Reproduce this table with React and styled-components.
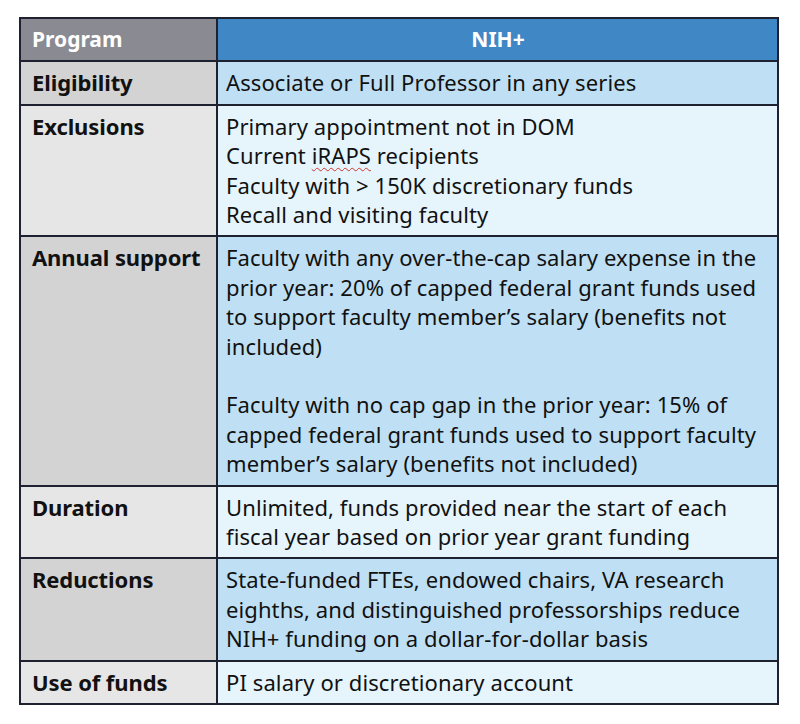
import React from "react";
import styled, { createGlobalStyle } from "styled-components";

const Global = createGlobalStyle`
  html, body { margin: 0; padding: 0; background: #ffffff; }
  body { font-family: "Noto Sans", "Open Sans", sans-serif; }
`;

const Page = styled.div`
  width: 800px;
  height: 724px;
  padding: 17px 0 0 19px;
  box-sizing: border-box;
`;

const Table = styled.div`
  display: grid;
  grid-template-columns: 195px 1fr;
  gap: 2px;
  padding: 2px;
  width: 760px;
  box-sizing: border-box;
  background: #1e2230;
`;

const Cell = styled.div`
  font-size: 22px;
  line-height: 29.4px;
  color: #111111;
  padding: ${(p) => (p.$label ? "6px 6px 6px 11px" : "6px 6px 6px 8px")};
  background: ${(p) => p.$bg};
  font-weight: ${(p) => (p.$label ? 700 : 400)};
  white-space: nowrap;
  letter-spacing: ${(p) => (p.$label ? "-0.1px" : "0.1px")};
`;

const HeadCell = styled.div`
  font-size: 21px;
  line-height: 29.4px;
  font-weight: 700;
  color: #ffffff;
  padding: 6px 10px 6px 11px;
  background: ${(p) => p.$bg};
  text-align: ${(p) => p.$align || "left"};
`;

const Gap = styled.div`
  height: 29.4px;
`;

const Spell = styled.span`
  text-decoration: underline wavy #d0342c;
  text-decoration-thickness: 1px;
  text-underline-offset: 3px;
  text-decoration-skip-ink: none;
`;

const rows = [
  {
    label: "Eligibility",
    lines: ["Associate or Full Professor in any series"],
  },
  {
    label: "Exclusions",
    lines: [
      "Primary appointment not in DOM",
      <>Current <Spell>iRAPS</Spell> recipients</>,
      "Faculty with > 150K discretionary funds",
      "Recall and visiting faculty",
    ],
  },
  {
    label: "Annual support",
    lines: [
      "Faculty with any over-the-cap salary expense in the",
      "prior year: 20% of capped federal grant funds used",
      "to support faculty member’s salary (benefits not",
      "included)",
      null,
      "Faculty with no cap gap in the prior year: 15% of",
      "capped federal grant funds used to support faculty",
      "member’s salary (benefits not included)",
    ],
  },
  {
    label: "Duration",
    lines: [
      "Unlimited, funds provided near the start of each",
      "fiscal year based on prior year grant funding",
    ],
  },
  {
    label: "Reductions",
    lines: [
      "State-funded FTEs, endowed chairs, VA research",
      "eighths, and distinguished professorships reduce",
      "NIH+ funding on a dollar-for-dollar basis",
    ],
  },
  {
    label: "Use of funds",
    lines: ["PI salary or discretionary account"],
  },
];

export default function App() {
  return (
    <Page>
      <Global />
      <Table>
        <HeadCell $bg="#898a92">Program</HeadCell>
        <HeadCell $bg="#3f88c5" $align="center">NIH+</HeadCell>
        {rows.map((r, i) => {
          const odd = i % 2 === 0;
          return (
            <React.Fragment key={r.label}>
              <Cell $label $bg={odd ? "#d3d3d3" : "#e6e6e6"}>{r.label}</Cell>
              <Cell $bg={odd ? "#bfe0f4" : "#e6f4fc"}>
                {r.lines.map((l, j) =>
                  l === null ? <Gap key={j} /> : <div key={j}>{l}</div>
                )}
              </Cell>
            </React.Fragment>
          );
        })}
      </Table>
    </Page>
  );
}
